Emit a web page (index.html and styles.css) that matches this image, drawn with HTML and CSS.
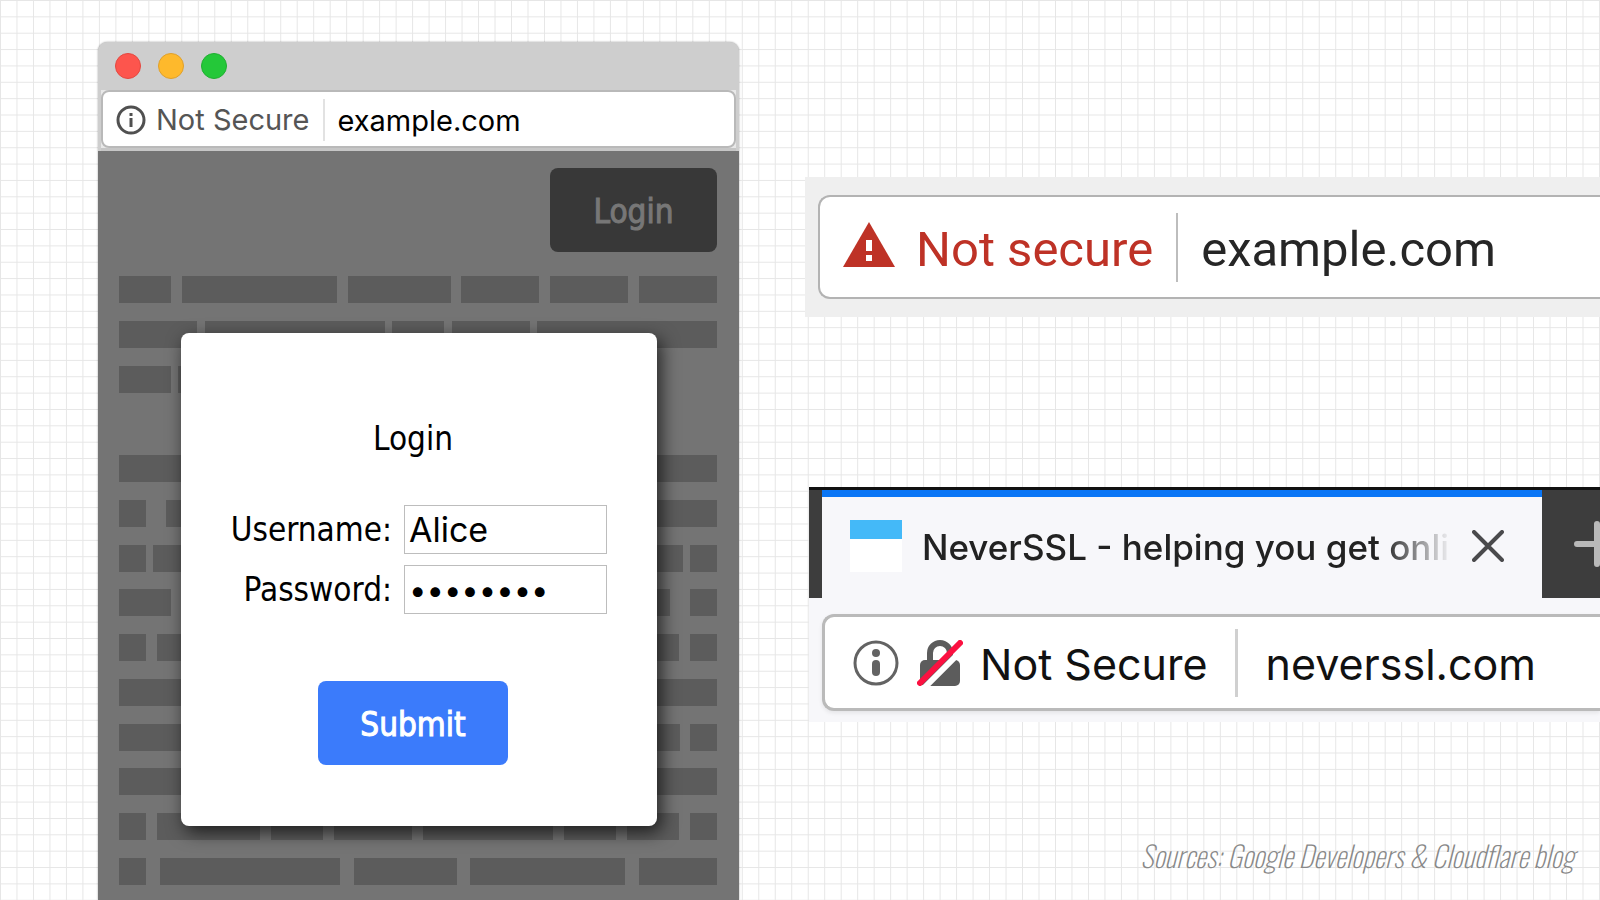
FILE: index.html
```html
<!DOCTYPE html>
<html lang="en">
<head>
    <meta charset="UTF-8">
    <meta name="viewport" content="width=device-width, initial-scale=1.0">
    <title>Not Secure - browser warnings</title>
    <link rel="stylesheet" href="styles.css">
</head>
<body>
    <main class="slide">
        <!-- Browser window with login dialog -->
        <section class="window">
            <div class="titlebar">
                <button type="button" class="light red" aria-label="Close window"></button>
                <button type="button" class="light yellow" aria-label="Minimize window"></button>
                <button type="button" class="light green" aria-label="Zoom window"></button>
            </div>
            <div class="toolbar">
                <div class="address">
                    <svg class="info-icon" viewBox="0 0 30 30" aria-hidden="true">
                        <circle cx="15" cy="15" r="13" fill="none" stroke="#505050" stroke-width="3"/>
                        <rect x="13.5" y="8" width="3" height="3" fill="#505050"/>
                        <rect x="13.5" y="13" width="3" height="9" fill="#505050"/>
                    </svg>
                    <label class="status" for="windowUrl">Not Secure</label>
                    <input type="text" id="windowUrl" value="example.com">
                </div>
            </div>
            <div class="page">
                <button type="button" class="btn login-btn">Login</button>
                <div class="lines">
                    <div class="line"><i class="w52"></i><i class="w155"></i><i class="w103"></i><i class="w78"></i><i class="w78"></i><i class="w78"></i></div>
                    <div class="line"><i class="w78"></i><i class="w180"></i><i class="w52"></i><i class="w78"></i><i class="w180"></i></div>
                    <div class="line short"><i class="w52"></i><i class="w155"></i><i class="w103"></i></div>
                    <div class="line"></div>
                    <div class="line"><i class="w130"></i><i class="w155"></i><i class="w103"></i><i class="w180"></i></div>
                    <div class="line"><i class="w27"></i><i class="w155"></i><i class="w103"></i><i class="w155"></i><i class="w78"></i></div>
                    <div class="line"><i class="w27"></i><i class="w180"></i><i class="w155"></i><i class="w180"></i><i class="w27"></i></div>
                    <div class="line"><i class="w52"></i><i class="w155"></i><i class="w180"></i><i class="w103"></i><i class="w27"></i></div>
                    <div class="line"><i class="w27"></i><i class="w180"></i><i class="w130"></i><i class="w103"></i><i class="w78"></i><i class="w27"></i></div>
                    <div class="line"><i class="w103"></i><i class="w180"></i><i class="w155"></i><i class="w130"></i></div>
                    <div class="line"><i class="w180"></i><i class="w180"></i><i class="w180"></i><i class="w27"></i></div>
                    <div class="line"><i class="w155"></i><i class="w130"></i><i class="w180"></i><i class="w103"></i></div>
                    <div class="line"><i class="w27"></i><i class="w103"></i><i class="w52"></i><i class="w78"></i><i class="w130"></i><i class="w52"></i><i class="w52"></i><i class="w27"></i></div>
                    <div class="line"><i class="w27"></i><i class="w180"></i><i class="w103"></i><i class="w155"></i><i class="w78"></i></div>
                </div>
                <form class="dialog">
                    <h1>Login</h1>
                    <div class="fields">
                        <label for="username">Username:</label>
                        <input type="text" id="username" name="username" value="Alice">
                        <label for="password">Password:</label>
                        <input type="password" id="password" name="password" value="password">
                    </div>
                    <button type="button" class="btn submit-btn">Submit</button>
                </form>
            </div>
        </section>

        <div class="column">
            <!-- Chrome address bar -->
            <section class="chrome">
                <div class="chrome-address">
                    <svg class="warning-icon" viewBox="0 0 52 45" aria-hidden="true">
                        <path d="M26 0L52 45H0z" fill="#be3226"/>
                        <rect x="23" y="18" width="6" height="11" fill="#fff"/>
                        <rect x="23" y="33" width="6" height="6" fill="#fff"/>
                    </svg>
                    <label class="chrome-status" for="chromeUrl">Not secure</label>
                    <input type="text" id="chromeUrl" value="example.com">
                </div>
            </section>

            <!-- Firefox tab and address bar -->
            <section class="firefox">
                <div class="tabs">
                    <div class="tab">
                        <span class="favicon"></span>
                        <span class="tab-title">NeverSSL - helping you get onli</span>
                        <button type="button" class="tab-close" aria-label="Close tab">
                            <svg viewBox="0 0 32 32"><path d="M2 2L30 30M30 2L2 30" stroke="#4a4a4c" stroke-width="4" stroke-linecap="round"/></svg>
                        </button>
                    </div>
                    <button type="button" class="tab-new" aria-label="New tab">
                        <svg viewBox="0 0 46 46"><path d="M23 3V43M3 23H43" stroke="#b9b9b9" stroke-width="6" stroke-linecap="round"/></svg>
                    </button>
                </div>
                <div class="firefox-address">
                    <svg class="firefox-info" viewBox="0 0 46 46" aria-hidden="true">
                        <circle cx="23" cy="23" r="21" fill="none" stroke="#636363" stroke-width="3"/>
                        <circle cx="23" cy="13" r="4" fill="#636363"/>
                        <rect x="19" y="20" width="8" height="16" rx="4" fill="#636363"/>
                    </svg>
                    <svg class="lock-icon" viewBox="0 0 46 46" aria-hidden="true">
                        <path d="M13 22V13a10 10 0 0 1 20 0V22" fill="none" stroke="#5c5c5c" stroke-width="6"/>
                        <rect x="3" y="20" width="40" height="26" rx="5" fill="#5c5c5c"/>
                        <path d="M7 48L48 7" stroke="#fff" stroke-width="6"/>
                        <path d="M3 43L43 3" stroke="#fb1141" stroke-width="6" stroke-linecap="round"/>
                    </svg>
                    <label class="firefox-status" for="firefoxUrl">Not Secure</label>
                    <input type="text" id="firefoxUrl" value="neverssl.com">
                </div>
            </section>

            <footer class="sources">Sources: Google Developers &amp; Cloudflare blog</footer>
        </div>
    </main>
</body>
</html>
```
FILE: styles.css
```css
* {
    box-sizing: border-box;
}
body {
    margin: 0;
    font-family: Inter, "Liberation Sans", sans-serif;
    background-color: #fff;
    background-image:
        linear-gradient(to right, #e6e6e6 1px, transparent 1px),
        linear-gradient(to bottom, #e6e6e6 1px, transparent 1px);
    background-size: calc(100vw / 97) calc(100vh / 55);
}
button {
    border: 0;
    padding: 0;
    background: none;
}
input {
    min-width: 0;
    border: 0;
    padding: 0;
    background: none;
    font-family: inherit;
    outline: none;
}
svg {
    display: block;
    flex: none;
}
.slide {
    display: grid;
    grid-template-columns: 641fr 795fr;
    gap: 66px;
    height: 100vh;
    padding-left: 98px;
    overflow: hidden;
}

/* Browser window */
.window {
    display: flex;
    flex-direction: column;
    margin-top: 42px;
    min-width: 0;
    min-height: 0;
    border-radius: 9px 9px 0 0;
    box-shadow: 0 0 2px rgba(0, 0, 0, 0.4);
    background: #cecece;
}
.titlebar {
    display: flex;
    align-items: center;
    gap: 17px;
    height: 48px;
    padding-left: 17px;
}
.light {
    width: 26px;
    height: 26px;
    border-radius: 50%;
}
.red {
    background: #fd554d;
    border: 1px solid #e5473f;
}
.yellow {
    background: #feb92c;
    border: 1px solid #e0a02a;
}
.green {
    background: #24c839;
    border: 1px solid #1faf30;
}
.toolbar {
    margin: 0 3px;
    padding-bottom: 3px;
    background: linear-gradient(#e8e8e8 58px, #c6c6c6 58px);
}
.address {
    display: flex;
    align-items: center;
    height: 58px;
    padding: 2px 0 0 13px;
    border: 2px solid #b9b9b9;
    border-radius: 8px;
    background: #fff;
}
.info-icon {
    width: 30px;
    height: 30px;
    margin-right: 10px;
}
.status {
    padding-right: 14px;
    border-right: 2px solid #e2e2e2;
    font-size: 29px;
    line-height: 42px;
    color: #555;
}
.address input {
    flex: 1;
    padding-left: 12px;
    font-size: 29px;
    color: #000;
}
.page {
    position: relative;
    flex: 1;
    display: flex;
    flex-direction: column;
    padding: 17px 22px 0 21px;
    background: #747474;
}
.btn {
    height: 84px;
    padding-top: 2px;
    border-radius: 8px;
    font-family: "DejaVu Sans Condensed", "DejaVu Sans", sans-serif;
    font-size: 33px;
    -webkit-text-stroke: 1px;
}
.login-btn {
    align-self: flex-end;
    width: 167px;
    background: #383838;
    color: #777;
}
.lines {
    display: flex;
    flex-direction: column;
    justify-content: space-between;
    flex: none;
    height: 609px;
    margin-top: 24px;
}
.line {
    display: flex;
    justify-content: space-between;
    height: 27px;
}
.short {
    justify-content: flex-start;
    gap: 7px;
}
.line i {
    background: #5c5c5c;
}
.w27 { width: 27px; }
.w52 { width: 52px; }
.w78 { width: 78px; }
.w103 { width: 103px; }
.w130 { width: 130px; }
.w155 { width: 155px; }
.w180 { width: 180px; }

/* Login dialog, over the page */
.dialog {
    position: absolute;
    top: 182px;
    left: 83px;
    right: 82px;
    display: flex;
    flex-direction: column;
    align-items: center;
    padding: 85px 12px 61px 0;
    border-radius: 8px;
    background: #fff;
    box-shadow: 4px 6px 18px rgba(0, 0, 0, 0.7);
    font-family: "DejaVu Sans Condensed", "DejaVu Sans", sans-serif;
}
.dialog h1 {
    margin: 0;
    font-size: 33px;
    font-weight: normal;
    line-height: 42px;
}
.fields {
    display: grid;
    grid-template-columns: auto 203px;
    gap: 11px 12px;
    margin: 45px 0 67px;
    align-self: flex-end;
    padding-right: 38px;
}
.fields label {
    font-size: 33px;
    line-height: 49px;
    text-align: right;
}
.fields input {
    height: 49px;
    padding: 0 4px;
    border: 1px solid #bdbdbd;
    font-family: Inter, "Liberation Sans", sans-serif;
    font-size: 34px;
}
.fields input[type="password"] {
    font-size: 31px;
}
.submit-btn {
    width: 190px;
    background: #3b7bfb;
    color: #fff;
}

/* Right column */
.column {
    display: flex;
    flex-direction: column;
    min-width: 0;
    padding-top: 177px;
}
.chrome {
    padding: 18px 0 18px 13px;
    background: #efefef;
}
.chrome-address {
    display: flex;
    align-items: center;
    height: 104px;
    padding-left: 23px;
    border: 2px solid #b3b3b3;
    border-right: 0;
    border-radius: 12px 0 0 12px;
    background: #fff;
    font-family: Roboto, sans-serif;
}
.warning-icon {
    width: 52px;
    height: 45px;
    margin: 0 21px 6px 0;
}
.chrome-status {
    padding: 4px 23px 0 0;
    border-right: 2px solid #bdbdbd;
    font-size: 49px;
    line-height: 65px;
    color: #be3226;
}
.chrome-address input {
    flex: 1;
    padding: 4px 0 0 23px;
    font-size: 49px;
    color: #262626;
}
.firefox {
    height: 235px;
    margin: 170px 0 0 4px;
    border-top: 3px solid #111;
    background: #f7f7fa;
    overflow: hidden;
}
.tabs {
    display: flex;
    height: 108px;
    padding-left: 13px;
    background: #3d3d3d;
}
.tab {
    flex: 1;
    min-width: 0;
    display: flex;
    align-items: center;
    padding: 0 38px 4px 28px;
    border-top: 7px solid #0a76f6;
    background: #f7f7fa;
}
.favicon {
    flex: none;
    width: 52px;
    height: 52px;
    margin-right: 20px;
    border-top: 19px solid #44b9f8;
    background: #fff;
}
.tab-title {
    flex: 1;
    min-width: 0;
    padding-top: 2px;
    overflow: hidden;
    white-space: nowrap;
    font-size: 35px;
    font-weight: 500;
    line-height: 50px;
    color: #222;
    -webkit-mask-image: linear-gradient(to left, transparent, #000 70px);
    mask-image: linear-gradient(to left, transparent, #000 70px);
}
.tab-close {
    flex: none;
    width: 32px;
    margin-left: 20px;
}
.tab-new {
    flex: none;
    width: 58px;
    padding-left: 32px;
}
.tab-new svg {
    width: 46px;
}
.firefox-address {
    display: flex;
    align-items: center;
    height: 97px;
    margin: 16px 0 0 13px;
    padding-left: 28px;
    border: 3px solid #bababa;
    border-right: 0;
    border-radius: 12px 0 0 12px;
    background: #fff;
    box-shadow: 0 2px 4px rgba(0, 0, 0, 0.08);
}
.firefox-info {
    width: 46px;
    height: 46px;
    margin-right: 18px;
}
.lock-icon {
    width: 46px;
    height: 46px;
    margin-right: 17px;
}
.firefox-status {
    padding: 3px 27px 0 0;
    border-right: 3px solid #d0d0d0;
    font-size: 43px;
    line-height: 65px;
    color: #111;
}
.firefox-address input {
    flex: 1;
    padding: 3px 0 0 28px;
    font-size: 43px;
    color: #111;
}
.sources {
    margin-top: auto;
    padding: 0 26px 25px 0;
    font-family: "Oswald", "Open Sans Condensed", "Roboto Condensed", Roboto, sans-serif;
    font-size: 29px;
    font-style: italic;
    font-weight: 200;
    line-height: 40px;
    text-align: right;
    color: #888;
}
```
